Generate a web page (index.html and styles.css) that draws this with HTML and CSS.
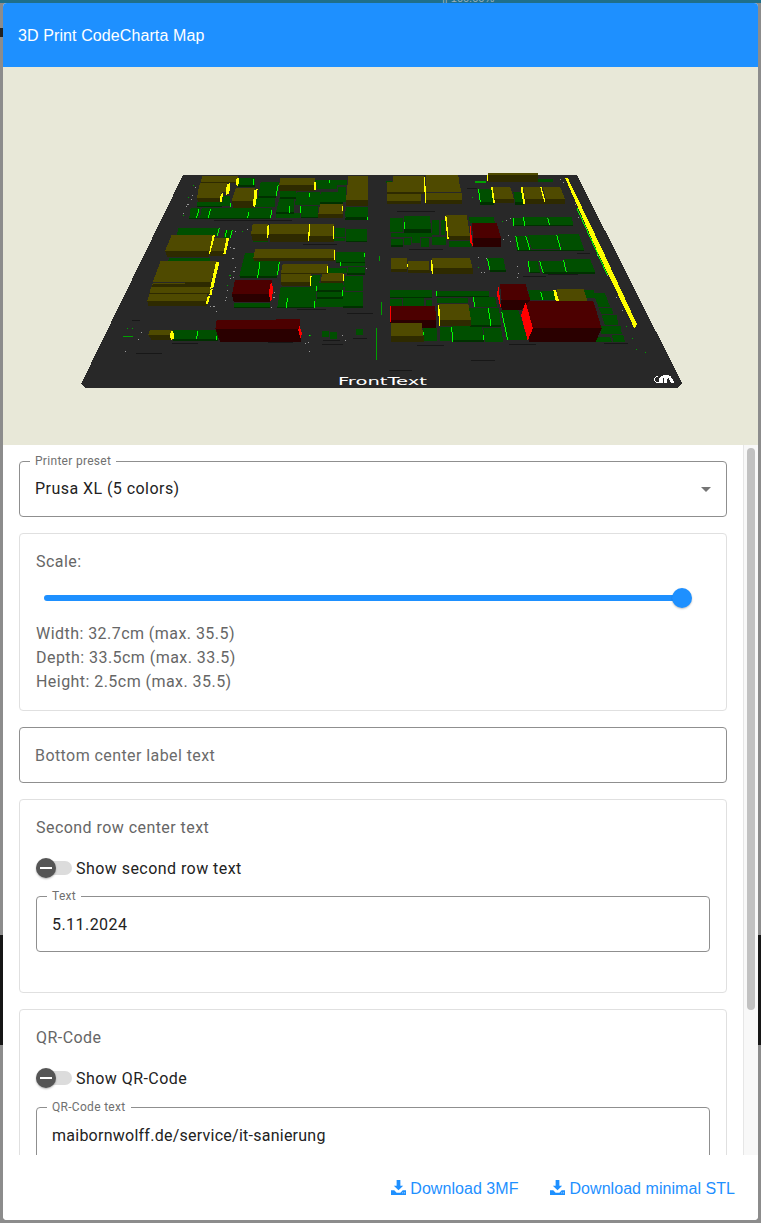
FILE: index.html
```html
<!DOCTYPE html>
<html lang="en">
<head>
  <meta charset="UTF-8" />
  <title>3D Print CodeCharta Map</title>
  <link rel="stylesheet" href="styles.css">
</head>
<body>
  <div class="zoom-level">|| 100.00%</div>

  <div class="dialog">
    <header class="dialog-title">3D Print CodeCharta Map</header>

    <div class="preview">
      <svg class="map" viewBox="3 67 755 378" width="755" height="378" shape-rendering="crispEdges">
        <path class="base" d="M183 175H577L682 383L677 388H86L81 384Z"/>

        <g transform="translate(70 165) scale(.33333)">
          <path class="line" d="M700 238H800M830 445H910M185 466H210M198 565H275M305 535H385M680 435H768M755 540H820M760 528H810M848 522H890M432 168H665M595 532H670"/>
          <path class="green-top" d="M505 40H555V60H505ZM572 50H628L618 92H565ZM630 78H678V95H630ZM680 82H750V120H675ZM752 80H820V112H750ZM735 45H830V60H735ZM740 60H800V72H740ZM805 65H828V112H805ZM560 100H615V125H555ZM628 100H672V140H618ZM695 122H745V155H692ZM362 130H390L385 158H358ZM395 130H605L600 160H390ZM380 112H455V122H380ZM828 125H893V155H825ZM617 145H690V160H617ZM460 92H480V122H456ZM325 190H445L440 210H320ZM465 195H488L478 220H460ZM795 190H825V215H793ZM828 192H890V228H828ZM793 218H825V228H793ZM550 225H595V232H550ZM298 278H420V288H295ZM525 265H630L622 332H508ZM797 262H885V290H797ZM810 292H885V303H810ZM835 306H885V325H832ZM745 310H830V325H745ZM825 332H880V365H820ZM825 367H880V378H825ZM820 380H880V422H820ZM740 355H820V375H745ZM740 380H818V395H740ZM738 402H818V425H735ZM632 365H740L735 425H622ZM492 415H600V427H492ZM725 330H752L745 365H722ZM310 495H382L380 522H310ZM385 495H440L445 522H383ZM755 498H778V516H755ZM780 502H802V522H780ZM858 492H880V510H858Z"/>
          <path class="green-front" d="M505 60H555V65H505ZM565 92H618V100H565ZM630 95H678V102H630ZM618 140H672V147H618ZM750 112H820V118H750ZM358 158H600V162H358ZM828 155H893V165H825ZM692 155H745V160H692ZM508 332H622V340H510ZM797 290H885V294H797ZM832 325H885V330H832ZM820 422H880V429H820ZM622 425H735V429H622ZM740 375H820V380H740ZM740 395H818V402H740ZM310 522H445V528H310ZM492 427H600V430H492ZM380 122H455V125H380ZM828 228H890V231H828Z"/>
          <path class="olive-top" d="M397 34H503V52H392ZM390 55H472L470 80H384ZM385 82H455L452 100H380ZM497 70H555L550 108H485ZM630 40H735V60H628ZM835 34H893V105H828ZM750 118H818V148H745ZM548 178H595V208H543ZM600 176H718V208H597ZM720 178H792V213H718ZM305 210H430L418 258H285ZM425 218H476L462 258H418ZM555 252H795V280H550ZM638 297H773V323H633ZM635 324H722V352H632ZM757 325H820V348H752ZM272 288H440L422 352H248ZM248 355H420V365H245ZM243 366H420V385H238ZM238 388H412V408H232ZM240 495H305V510H235Z"/>
          <path class="olive-front" d="M392 52H503V55H392ZM384 80H470V82H384ZM380 100H452V112H385ZM485 108H550V128H490ZM628 60H735V78H628ZM828 105H893V122H828ZM745 148H818V160H745ZM543 208H595V228H548ZM597 208H718V230H600ZM718 213H792V230H720ZM285 258H418V275H292ZM418 258H462V272H420ZM550 280H795V287H552ZM633 323H773V326H633ZM632 352H722V362H635ZM752 348H820V355H755ZM345 352H422V365H345ZM248 358H345V365H245ZM238 385H420V388H238ZM232 408H412V422H235ZM235 510H305V525H245Z"/>
          <path class="red-top" d="M495 345H605V392H485ZM440 466H618V462H690V492H436Z"/>
          <path class="red-front" d="M485 388H600V412H492ZM436 492H692V530H450Z"/>
          <path class="yellow" d="M500 38H507L505 65L498 60ZM470 58L480 55L478 85L468 90ZM452 88L458 85L457 110L450 112ZM553 75L563 72L558 115L553 128L549 120ZM733 52H738V75H733ZM816 122H819V138H816ZM592 182L598 180L595 215L590 222ZM716 178H720L718 228H715ZM789 182H792V222H789ZM428 212L435 210L422 260L415 275ZM470 218H478L467 268H460ZM793 255H796V284H793ZM772 303H775V323H772ZM721 332H725L722 362H720ZM820 328H823V348H820ZM438 292H448L430 368L420 372ZM422 372H428L424 392L418 390ZM414 392H420L414 418L408 415ZM303 498H310L312 520L303 525L300 510Z"/>
          <path class="lime" d="M552 42V60M625 60L618 92M660 122V145M693 122V145M387 133L380 158M421 133L415 160M537 140L532 160M605 135L602 160M448 188L442 212M470 195L465 215M487 195L480 220M570 292L563 338M628 290L622 330M883 265V276M811 292V302M740 362V378M818 375V392M653 400L648 428M735 408V428M383 497L380 522M441 512V525M720 510V514M893 155V165M718 85V95M778 45V55M482 115V125"/>
          <path class="red" d="M603 350L610 372L603 415L596 385ZM688 480L696 505L692 522L685 495Z"/>
          <path class="dots" d="M375 65h4v3h-4zM365 90h4v3h-4zM362 103h4v3h-4zM352 118h4v3h-4zM348 124h4v3h-4zM340 145h3v3h-3zM532 192h3v3h-3zM495 198h3v3h-3zM480 246h4v3h-4zM490 248h4v3h-4zM487 280h4v3h-4zM495 305h4v3h-4zM490 318h4v3h-4zM488 335h4v3h-4zM480 340h4v3h-4zM470 375h4v3h-4zM468 395h4v3h-4zM465 405h4v3h-4zM420 424h4v3h-4zM430 424h4v3h-4zM438 438h4v3h-4zM612 380h4v3h-4zM610 395h4v3h-4zM603 426h4v3h-4zM212 500h3v3h-3zM205 522h3v3h-3zM165 558h3v3h-3zM705 534h3v3h-3zM715 532h3v3h-3zM716 558h3v3h-3zM825 526h3v3h-3zM815 510h3v3h-3zM887 308h3v3h-3z"/>
          <path class="dots-green" d="M370 60h3v3h-3zM355 95h3v3h-3zM338 150h3v3h-3zM516 198h3v3h-3zM470 360h4v3h-4zM478 330h4v3h-4zM170 490h4v3h-4zM185 490h4v3h-4zM720 510h3v3h-3zM160 513h30v2h-30zM918 490h2v95h-2z"/>
        </g>

        <g transform="translate(375 165) scale(.33333)">
          <path class="line" d="M66 139H180M102 253H204M606 265H645M445 334H512M520 328H610M126 541H207M402 538H482M688 535H760M288 586H360M42 616H112M276 72H305"/>
          <path class="green-top" d="M88 153H165L168 192H88ZM45 160H85V200H45ZM48 203H170V215H48ZM48 222H84V240H48ZM87 218H108V240H87ZM110 216H135V235H110ZM138 220H162V245H138ZM172 215H212V240H172ZM170 165H192V210H170ZM197 165H210V210H197ZM222 228H288V245H222ZM280 155H355L360 175H285ZM308 72H350L356 112H315ZM415 82H445L448 112H420ZM488 42H535V52H488ZM34 48H52V55H34ZM410 160H445L448 180H415ZM447 156H515L520 180H450ZM520 156H590L595 180H525ZM420 212H455L468 255H425ZM458 210H545L560 252H470ZM548 208H612L628 255H562ZM337 280H385L392 315H345ZM458 287H488L495 322H465ZM495 288H565L572 320H505ZM568 282H645L660 320H578ZM45 375H172V395H45ZM185 378H342V392H185ZM45 402H80V422H45ZM83 398H148V422H83ZM152 405H172V422H152ZM185 400H278V415H185ZM295 395H360L366 425H300ZM280 430H372L378 480H285ZM378 435H430L458 525H395ZM145 490H185V528H145ZM195 487H228V528H195ZM230 482H320L328 525H232ZM325 490H378L385 530H330ZM460 375H495L500 405H465ZM497 378H538L545 405H500ZM625 375H655L665 400H635ZM655 385H690L705 425H670ZM672 430H710L715 448H680ZM680 450H725L730 480H690ZM672 482H738L740 508H680ZM665 515H705L710 530H660ZM710 510H745L750 530H715Z"/>
          <path class="green-front" d="M88 192H168V203H88ZM315 112H356V120H315ZM420 112H448V119H420ZM415 180H595V184H415ZM425 255H628V258H425ZM345 315H392V321H345ZM465 322H495V325H465ZM505 320H660V326H505ZM45 395H172V400H45ZM185 392H342V397H185ZM285 480H378V486H285ZM232 525H328V530H232ZM48 240H84V245H48Z"/>
          <path class="olive-top" d="M53 34H148V80H36V52H53ZM36 88H138V108H36ZM153 30H250L252 56H153ZM153 58H255L258 80H153ZM153 84H260L262 105H153ZM340 25H490V30H338ZM352 65H405L417 102H358ZM445 67H498L508 102H450ZM503 65H555L570 102H512ZM212 150H275L285 212H218ZM48 280H95V312H48ZM98 288H162V315H98ZM172 278H285L292 308H172ZM545 372H625L638 408H550ZM192 418H280L288 465H195ZM48 475H140L145 512H48Z"/>
          <path class="olive-front" d="M36 80H148V87H36ZM36 108H138V118H36ZM153 105H262V118H153ZM338 30H490V52H338ZM358 102H417V115H360ZM450 102H570V118H450ZM218 212H288V226H220ZM48 312H95V322H48ZM98 315H165V323H98ZM172 308H294V326H172ZM195 465H288V482H195ZM48 512H147V532H48Z"/>
          <path class="red-top" d="M290 175H365L378 218H295ZM375 358H452L466 405H380ZM46 423H180L184 465H46ZM452 408H655L680 490H462Z"/>
          <path class="red-front" d="M295 218H378V245H295ZM378 405H466L440 435H380ZM46 465H184L182 488H142L140 473H46ZM462 490H680L662 530H462Z"/>
          <path class="lime" d="M310 72L316 112M414 160L416 182M445 156L449 182M518 158L524 180M422 212L431 255M452 212L465 255M545 210L558 255M338 282L344 315M460 288L464 322M494 288L505 325M565 284L574 322M184 378V392M295 396L299 425M340 430L348 482M380 440L398 525M230 485L233 530M88 172V192M145 500V510M326 510V525M497 380L503 405M606 130L697 330"/>
          <path class="yellow" d="M570 38H578L680 250L786 478L778 490L668 262ZM147 36H150V80H147ZM150 62H154V115H150ZM210 152H214L221 222H217ZM336 30H340V48H336ZM348 65H353L360 115H355ZM437 67H443L451 118H445ZM496 67H500L512 112H508ZM96 296H99V306H96ZM168 285H172L174 326H170ZM189 420H193L196 482H192ZM535 375H543L552 408H542Z"/>
          <path class="red" d="M286 180L294 245L286 232ZM370 360L378 430L366 392ZM46 424H48V472H46ZM452 412L474 490L458 527L438 450Z"/>
          <path class="dots" d="M405 160h3v3h-3zM392 165h3v3h-3zM398 210h3v3h-3zM385 222h3v3h-3zM405 228h3v3h-3zM310 276h3v3h-3zM333 278h3v3h-3zM318 320h3v3h-3zM328 320h3v3h-3zM426 304h3v3h-3zM430 324h3v3h-3zM425 336h3v3h-3zM555 42h3v3h-3zM565 50h3v3h-3zM600 118h3v3h-3zM610 155h3v3h-3zM632 188h3v3h-3zM665 270h3v3h-3zM695 330h3v3h-3zM722 395h3v3h-3zM742 436h3v3h-3z"/>
          <path class="dots-green" d="M290 96h3v3h-3zM380 168h3v3h-3zM310 305h3v3h-3zM12 272h2v16h-2zM18 410h2v40h-2zM3 490h2v95h-2zM783 552h3v3h-3zM810 560h3v3h-3zM772 518h3v3h-3zM752 482h3v3h-3zM300 48h32v5h-32z"/>
          <path class="logo-mark" d="M853 655V640Q858 631 870 631H880Q888 632 892 642L900 655H889L879 637L875 655H868L866 637L862 655Z"/>
          <path class="logo-ring" d="M848 635Q836 636 838 646Q840 654 852 654"/>
        </g>

        <text class="front-text" x="338" y="385" textLength="89" lengthAdjust="spacingAndGlyphs">FrontText</text>
      </svg>
    </div>

    <main class="content">
      <div class="field">
        <span class="field-label">Printer preset</span>
        <span class="field-value">Prusa XL (5 colors)</span>
        <span class="select-arrow"></span>
      </div>

      <section class="card">
        <div class="card-title">Scale:</div>
        <div class="slider"><span class="slider-thumb"></span></div>
        <div class="size-info">Width: 32.7cm (max. 35.5)</div>
        <div class="size-info">Depth: 33.5cm (max. 33.5)</div>
        <div class="size-info">Height: 2.5cm (max. 35.5)</div>
      </section>

      <div class="field">
        <span class="field-placeholder">Bottom center label text</span>
      </div>

      <section class="card card-text">
        <div class="card-title">Second row center text</div>
        <label class="switch-row">
          <span class="switch"><span class="switch-thumb"></span></span>
          Show second row text
        </label>
        <div class="field">
          <span class="field-label">Text</span>
          <span class="field-value">5.11.2024</span>
        </div>
      </section>

      <section class="card card-text card-qr">
        <div class="card-title">QR-Code</div>
        <label class="switch-row">
          <span class="switch"><span class="switch-thumb"></span></span>
          Show QR-Code
        </label>
        <div class="field">
          <span class="field-label">QR-Code text</span>
          <span class="field-value qr-url">maibornwolff.de/service/it-sanierung</span>
        </div>
      </section>

      <div class="scrollbar"><span class="scrollbar-thumb"></span></div>
    </main>

    <footer class="actions">
      <a class="action" href="#">
        <svg class="download-icon" viewBox="0 0 16 16"><path d="M6 0h4v6h3l-5 5-5-5h3zM0 11h3.500l2.500 2.500h4l2.500-2.500H16v5H0zM12 13.200h1v1h-1zM14 13.200h1v1h-1z" fill-rule="evenodd"/></svg>
        Download 3MF
      </a>
      <a class="action" href="#">
        <svg class="download-icon" viewBox="0 0 16 16"><path d="M6 0h4v6h3l-5 5-5-5h3zM0 11h3.500l2.500 2.500h4l2.500-2.500H16v5H0zM12 13.200h1v1h-1zM14 13.200h1v1h-1z" fill-rule="evenodd"/></svg>
        Download minimal STL
      </a>
    </footer>
  </div>
</body>
</html>
```

FILE: styles.css
```css
html, body {
  height: 100%;
}

body {
  position: relative;
  margin: 0;
  padding: 3px;
  box-sizing: border-box;
  overflow: hidden;
  background:
    linear-gradient(#1f6f8b, #1f6f8b) 0 0 / 100% 3px no-repeat,
    linear-gradient(#222, #222) 0 28px / 3px 9px no-repeat,
    linear-gradient(#161616, #161616) 0 935px / 3px 110px no-repeat,
    linear-gradient(#161616, #161616) 100% 935px / 3px 110px no-repeat,
    #8c8c8c;
  font-family: Roboto, sans-serif;
  color: #222;
}

.zoom-level {
  position: absolute;
  top: -8px;
  left: 442px;
  color: #9db0b8;
  font-family: "Liberation Sans", sans-serif;
  font-size: 11px;
  line-height: 13px;
  white-space: nowrap;
}

.dialog {
  position: relative;
  height: 1217px;
  display: flex;
  flex-direction: column;
  background: #fff;
  border-radius: 4px;
  overflow: hidden;
}

.dialog-title {
  flex: 0 0 64px;
  display: flex;
  align-items: center;
  box-sizing: border-box;
  padding: 1px 0 0 15px;
  background: #1e90ff;
  color: #fff;
  font-family: "Liberation Sans", sans-serif;
  font-size: 16px;
  letter-spacing: 0.1px;
}

.preview {
  flex: 0 0 378px;
  background: #e8e8d8;
}

.map {
  display: block;
}

.base { fill: #282828; }
.line { fill: none; stroke: #171717; stroke-width: 3; }
.green-top { fill: #004f00; }
.green-front { fill: #003000; }
.olive-top { fill: #4f4a00; }
.olive-front { fill: #2e2a00; }
.red-top { fill: #4c0000; }
.red-front { fill: #2a0000; }
.yellow { fill: #ffff00; }
.lime { fill: none; stroke: #00ff00; stroke-width: 3; }
.red { fill: #ff0000; }
.dots { fill: #9a9a9a; }
.dots-green { fill: #00a000; }
.logo-mark { fill: #fff; }
.logo-ring { fill: none; stroke: #fff; stroke-width: 3; }

.front-text {
  fill: #fff;
  font-family: "DejaVu Sans", sans-serif;
  font-size: 11px;
}

.content {
  position: relative;
  flex: 1;
  min-height: 0;
  overflow: hidden;
  display: flex;
  flex-direction: column;
  gap: 16px;
  padding: 16px 31px 0 16px;
}

.field {
  position: relative;
  flex: none;
  height: 56px;
  box-sizing: border-box;
  display: flex;
  align-items: center;
  padding: 0 15px;
  border: 1px solid #8f8f8f;
  border-radius: 4px;
  font-size: 16px;
  letter-spacing: 0.45px;
}

.field-label {
  position: absolute;
  top: -8px;
  left: 10px;
  padding: 0 5px;
  background: #fff;
  color: #707070;
  font-size: 12px;
  line-height: 14px;
  letter-spacing: 0.3px;
}

.field-value {
  color: #222;
  margin-top: -1px;
}

.card .field-value {
  margin-top: 0;
}

.qr-url {
  letter-spacing: 0.25px;
}

.field-placeholder {
  color: #6b6b6b;
  letter-spacing: 0.42px;
}

.select-arrow {
  position: absolute;
  top: 25px;
  right: 15px;
  border-style: solid;
  border-width: 5px 5px 0;
  border-color: #757575 transparent transparent;
}

.card {
  flex: none;
  box-sizing: border-box;
  padding: 16px;
  border: 1px solid #e0e0e0;
  border-radius: 4px;
}

.card-title {
  color: #666;
  font-size: 16px;
  line-height: 24px;
  letter-spacing: 0.45px;
}

.slider {
  position: relative;
  height: 6px;
  margin: 21px 28px 21px 8px;
  border-radius: 3px;
  background: #1e90ff;
}

.slider-thumb {
  position: absolute;
  top: -7px;
  right: -10px;
  width: 20px;
  height: 20px;
  border-radius: 50%;
  background: #1e90ff;
  box-shadow: 0 1px 2px rgba(0, 0, 0, 0.25);
}

.size-info {
  color: #666;
  font-size: 16px;
  line-height: 24px;
  letter-spacing: 0.45px;
}

.card-text {
  height: 194px;
}

.switch-row {
  display: flex;
  align-items: center;
  gap: 4px;
  height: 24px;
  margin: 16px 0;
  font-size: 16px;
  letter-spacing: 0.45px;
}

.card-qr .switch-row {
  margin-bottom: 17px;
}

.switch {
  position: relative;
  width: 36px;
  height: 14px;
  border-radius: 7px;
  background: #dcdcdc;
}

.switch-thumb {
  position: absolute;
  top: -3px;
  left: 0;
  width: 20px;
  height: 20px;
  border-radius: 50%;
  background: #555;
  box-shadow: 0 1px 2px rgba(0, 0, 0, 0.3);
}

.switch-thumb::after {
  content: "";
  position: absolute;
  top: 9px;
  left: 4px;
  width: 12px;
  height: 2px;
  background: #fff;
}

.scrollbar {
  position: absolute;
  top: 0;
  right: 0;
  bottom: 0;
  width: 14px;
  border-left: 1px solid #e6e6e6;
  background: #f8f8f8;
}

.scrollbar-thumb {
  position: absolute;
  top: 3px;
  left: 3px;
  width: 8px;
  height: 562px;
  border-radius: 4px;
  background: #c1c1c1;
}

.actions {
  flex: 0 0 65px;
  display: flex;
  justify-content: flex-end;
  align-items: center;
  gap: 32px;
  box-sizing: border-box;
  padding: 2px 23px 0 0;
  position: relative;
  background: #fff;
}

.action {
  display: flex;
  align-items: center;
  gap: 4px;
  color: #1e90ff;
  font-family: "Liberation Sans", sans-serif;
  font-size: 16px;
  letter-spacing: 0.05px;
  text-decoration: none;
}

.download-icon {
  width: 15px;
  height: 15px;
  fill: #1e90ff;
  margin-top: -3px;
}
```
